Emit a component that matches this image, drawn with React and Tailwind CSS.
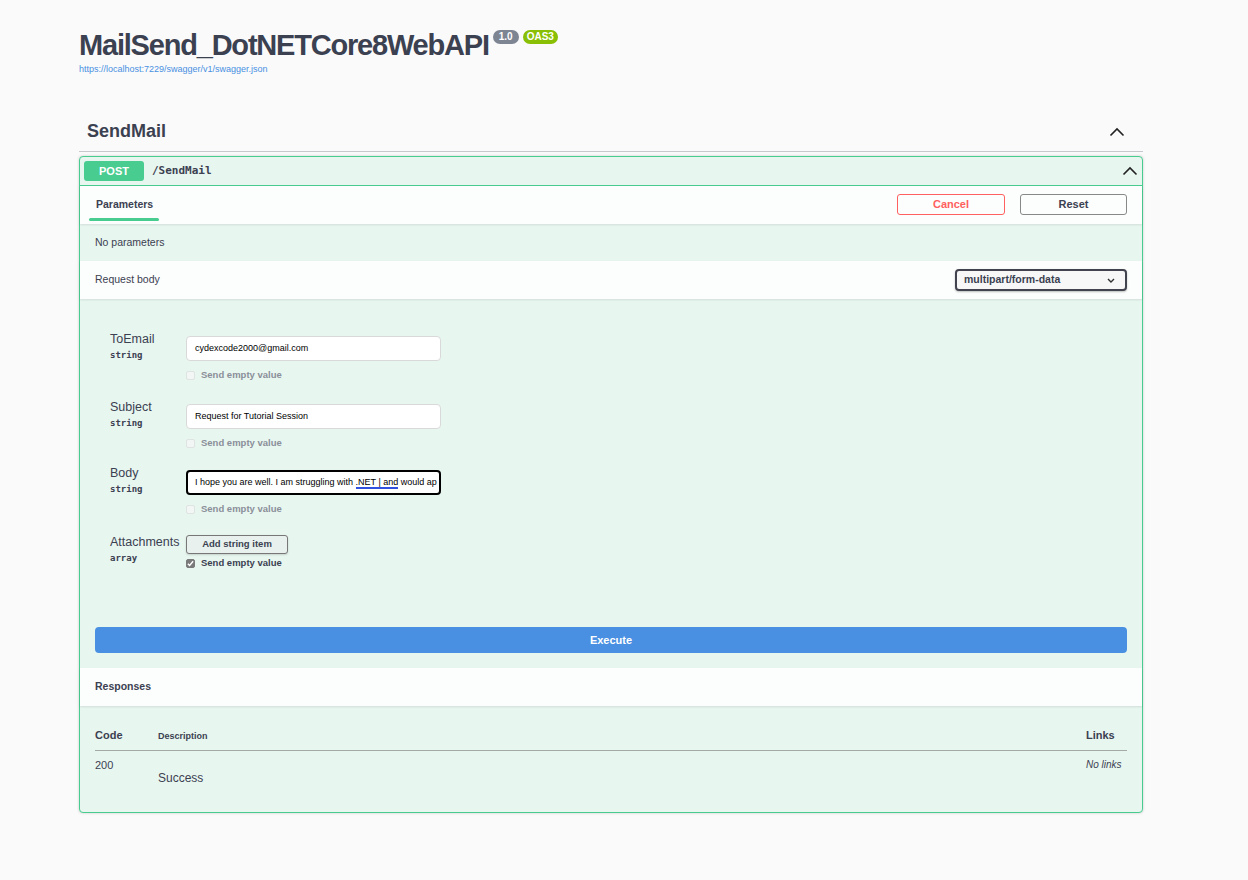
import React from 'react';

const sans = { fontFamily: '"Liberation Sans", Arial, sans-serif' };
const mono = { fontFamily: '"DejaVu Sans Mono", monospace' };

function Chevron({ className }) {
  return (
    <svg width="16" height="10" viewBox="0 0 16 10" className={className} fill="none" stroke="#222" strokeWidth="1.6">
      <path d="M1.5 8.5 L8 2 L14.5 8.5" />
    </svg>
  );
}

function EmptyCheck({ checked, className = 'mt-[8px]' }) {
  return (
    <div className={`flex items-center gap-[6px] h-[12px] ${className}`}>
      <span className={`w-[9px] h-[9px] rounded-[2px] border flex items-center justify-center ${checked ? 'bg-[#7a7a7a] border-[#7a7a7a]' : 'bg-[#f2f6f4] border-[#dfe3e1]'}`}>
        {checked && (
          <svg width="7" height="7" viewBox="0 0 8 8" fill="none" stroke="#fff" strokeWidth="1.6"><path d="M1 4.2 L3 6.2 L7 1.5" /></svg>
        )}
      </span>
      <span className={`text-[9.5px] font-bold ${checked ? 'text-[#3b4151]' : 'text-[#8a8f99]'}`}>Send empty value</span>
    </div>
  );
}

function Label({ name, type, offset }) {
  return (
    <div className={`w-[91px] pl-[15px] ${offset}`}>
      <div className="text-[12.5px] text-[#3b4151] leading-[14px]">{name}</div>
      <div className="text-[9px] font-bold text-[#3b4151] mt-[3px] leading-[12px]" style={mono}>{type}</div>
    </div>
  );
}

function Field({ name, type, value, focused, className }) {
  return (
    <div className={`flex ${className}`}>
      <Label name={name} type={type} offset="-mt-[4px]" />
      <div>
        <div className={`w-[255px] h-[25px] bg-white rounded-[4px] flex items-center whitespace-nowrap overflow-hidden text-[9px] text-black ${focused ? 'border-2 border-black px-[7px]' : 'border border-[#d9d9d9] px-[8px]'}`}>
          {value}
        </div>
        <EmptyCheck />
      </div>
    </div>
  );
}

export default function App() {
  return (
    <div className="min-h-[880px] bg-[#fafafa] text-[#3b4151]" style={sans}>
      <div className="ml-[79px] w-[1064px] pt-[27px]">
        {/* Info */}
        <div className="flex items-start">
          <h1 className="text-[29px] font-bold leading-[36px] tracking-[-1.2px] text-[#3b4151]">MailSend_DotNETCore8WebAPI</h1>
          <span className="ml-[4px] mt-[3px] h-[14px] px-[6px] rounded-[7px] bg-[#7d8492] text-white text-[10px] font-bold leading-[14px]">1.0</span>
          <span className="ml-[4px] mt-[3px] h-[14px] px-[4px] rounded-[7px] bg-[#89bf04] text-white text-[10px] font-bold leading-[14px]">OAS3</span>
        </div>
        <div className="text-[9px] text-[#4990e2] leading-[10px] mt-[1px]">https://localhost:7229/swagger/v1/swagger.json</div>

        {/* Tag */}
        <div className="mt-[38px] flex items-center justify-between h-[40px] border-b border-[#c6c8cb] pl-[8px] pr-[18px]">
          <span className="text-[18px] font-bold text-[#3b4151]">SendMail</span>
          <Chevron />
        </div>

        {/* Opblock */}
        <div className="mt-[4px] border border-[#49cc90] rounded-[4px] bg-[#e8f6f0] shadow-[0_0_3px_rgba(0,0,0,0.19)]">
          <div className="h-[29px] flex items-center border-b border-[#49cc90] px-[4px]">
            <span className="w-[60px] h-[20px] rounded-[3px] bg-[#49cc90] text-white text-[11px] font-bold flex items-center justify-center">POST</span>
            <span className="ml-[8px] text-[11px] font-semibold text-[#3b4151]" style={mono}>/SendMail</span>
            <Chevron className="ml-auto" />
          </div>

          {/* Parameters header */}
          <div className="h-[38px] bg-[#fcfdfd] flex items-center justify-between px-[15px] shadow-[0_1px_2px_rgba(0,0,0,0.1)]">
            <div className="relative h-full flex items-center px-[1px]">
              <span className="text-[10.5px] font-bold text-[#3b4151]">Parameters</span>
              <span className="absolute left-[-6px] right-[-5px] bottom-[3px] h-[3px] bg-[#49cc90] rounded-sm" />
            </div>
            <div className="flex gap-[15px] -mt-[2px]">
              <button className="w-[108px] h-[21px] rounded-[3px] border border-[#ff6060] text-[#ff6060] text-[11px] font-bold bg-transparent">Cancel</button>
              <button className="w-[107px] h-[21px] rounded-[3px] border border-[#888] text-[#3b4151] text-[11px] font-bold bg-transparent">Reset</button>
            </div>
          </div>

          <div className="h-[37px] flex items-center px-[15px] text-[10.5px] text-[#3b4151]">No parameters</div>

          {/* Request body header */}
          <div className="h-[38px] bg-[#fcfdfd] flex items-center justify-between px-[15px] shadow-[0_1px_2px_rgba(0,0,0,0.1)]">
            <span className="text-[10.5px] text-[#3b4151]">Request body</span>
            <div className="w-[172px] h-[22px] rounded-[4px] border-2 border-[#41444e] bg-[#f7f7f7] flex items-center justify-between pl-[7px] pr-[10px] shadow-[0_1px_2px_rgba(0,0,0,0.25)]">
              <span className="text-[10.5px] font-bold text-[#3b4151]">multipart/form-data</span>
              <svg width="8" height="5" viewBox="0 0 8 5" fill="none" stroke="#303030" strokeWidth="1.4"><path d="M1 1 L4 4 L7 1" /></svg>
            </div>
          </div>

          {/* Form */}
          <div className="px-[15px] pt-[37px] flex flex-col">
            <Field name="ToEmail" type="string" value="cydexcode2000@gmail.com" />
            <Field name="Subject" type="string" value="Request for Tutorial Session" className="mt-[23px]" />
            <Field
              name="Body"
              type="string"
              focused
              className="mt-[21px]"
              value={
                <span>
                  I hope you are well. I am struggling with{' '}
                  <span className="border-b-2 border-[#3050e0]">.NET<span className="text-black"> | </span>and</span> would ap
                </span>
              }
            />
            <div className="flex mt-[20px]">
              <Label name="Attachments" type="array" offset="pt-[0px]" />
              <div>
                <button className="block w-[102px] h-[19px] rounded-[3px] border border-[#777] bg-[#e8f1ed] text-[9.5px] font-bold text-[#3b4151] shadow-[0_1px_2px_rgba(0,0,0,0.15)]">Add string item</button>
                <EmptyCheck checked className="mt-[3px]" />
              </div>
            </div>
          </div>

          <div className="px-[15px] pt-[58px] pb-[15px]">
            <button className="block w-full h-[26px] rounded-[4px] bg-[#4990e2] text-white text-[11px] font-bold">Execute</button>
          </div>

          {/* Responses header */}
          <div className="h-[38px] bg-[#fcfdfd] flex items-center px-[15px] shadow-[0_1px_2px_rgba(0,0,0,0.1)]">
            <span className="text-[10.5px] font-bold text-[#3b4151]">Responses</span>
          </div>

          <div className="px-[15px] pt-[23px] pb-[25px]">
            <div className="flex items-end h-[22px] pb-[7px] border-b border-[#a4aaa8] text-[#3b4151]">
              <span className="w-[63px] text-[11px] font-bold">Code</span>
              <span className="text-[9px] font-bold">Description</span>
              <span className="ml-auto text-[11px] font-bold w-[41px]">Links</span>
            </div>
            <div className="flex pt-[6px]">
              <span className="w-[63px] text-[11px]">200</span>
              <span className="text-[12px] mt-[12px]">Success</span>
              <span className="ml-auto w-[41px] text-[10px] italic">No links</span>
            </div>
          </div>
        </div>
      </div>
    </div>
  );
}
